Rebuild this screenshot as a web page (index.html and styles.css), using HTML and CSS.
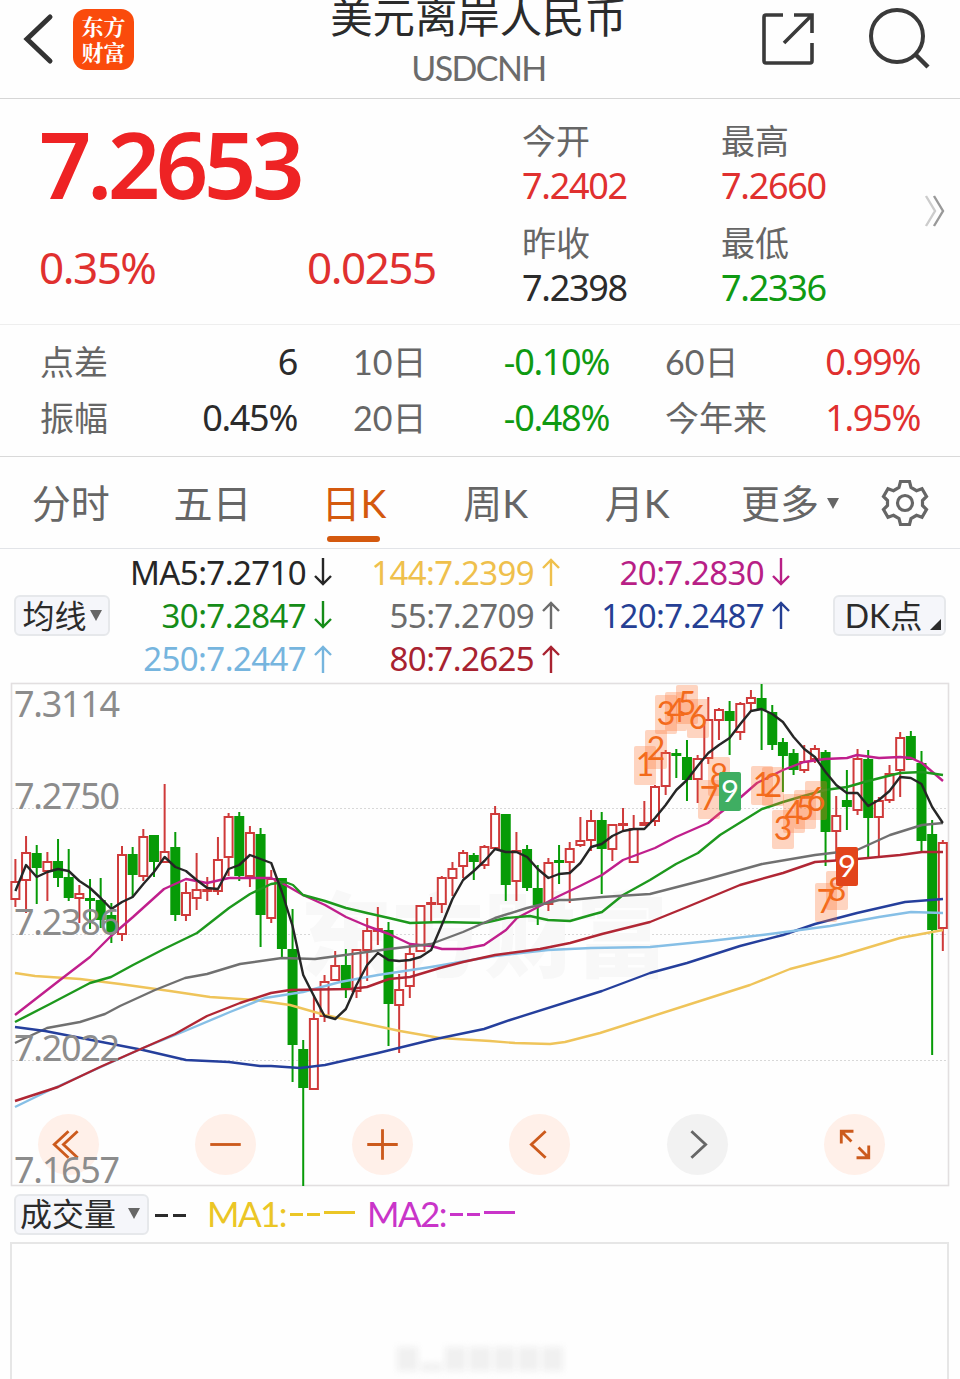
FILE: index.html
```
<!DOCTYPE html>
<html lang="zh-CN">
<head>
    <meta charset="UTF-8">
    <meta name="viewport" content="width=device-width, initial-scale=1.0">
    <title>美元离岸人民币 USDCNH</title>
    <link rel="stylesheet" href="styles.css">
</head>
<body>
    <header class="header">
        <div class="header-left">
            <svg class="back" width="32" height="52" viewBox="0 0 32 52"><path d="M28 4 L5 26 L28 48" fill="none" stroke="#333" stroke-width="5" stroke-linecap="round"/></svg>
            <div class="logo"><span>东方</span><span>财富</span></div>
        </div>
        <div class="header-title">
            <h1>美元离岸人民币</h1>
            <p>USDCNH</p>
        </div>
        <div class="header-right">
            <svg width="54" height="54" viewBox="0 0 54 54" fill="none" stroke="#3a3a3a" stroke-width="3.6"><path d="M22 3 H5 Q3 3 3 5 V49 Q3 51 5 51 H49 Q51 51 51 49 V31"/><path d="M33 3 H51 V21 M50 4 L23 31"/></svg>
            <svg width="64" height="64" viewBox="0 0 64 64" fill="none" stroke="#3a3a3a" stroke-width="4"><circle cx="30" cy="29" r="26"/><path d="M48 47 L61 60" stroke-width="4.5"/></svg>
        </div>
    </header>

    <section class="quote">
        <div class="quote-price">
            <div class="price">7.2653</div>
            <div class="change"><span>0.35%</span><span>0.0255</span></div>
        </div>
        <div class="quote-grid">
            <div><span class="label">今开</span><span class="num red">7.2402</span></div>
            <div><span class="label">最高</span><span class="num red">7.2660</span></div>
            <div><span class="label">昨收</span><span class="num">7.2398</span></div>
            <div><span class="label">最低</span><span class="num green">7.2336</span></div>
        </div>
        <svg class="more" width="24" height="34" viewBox="0 0 24 34" fill="none" stroke-width="2.4"><path d="M4 2 L13 17 L4 32" stroke="#ccc"/><path d="M12 2 L21 17 L12 32" stroke="#999"/></svg>
    </section>

    <section class="stats">
        <div><span class="label">点差</span><span class="num">6</span></div>
        <div><span class="label">10日</span><span class="num green">-0.10%</span></div>
        <div><span class="label">60日</span><span class="num red">0.99%</span></div>
        <div><span class="label">振幅</span><span class="num">0.45%</span></div>
        <div><span class="label">20日</span><span class="num green">-0.48%</span></div>
        <div><span class="label">今年来</span><span class="num red">1.95%</span></div>
    </section>

    <nav class="tabs">
        <a>分时</a>
        <a>五日</a>
        <a class="active">日K</a>
        <a>周K</a>
        <a>月K</a>
        <a>更多<i class="caret"></i></a>
        <a><svg width="48" height="48" viewBox="0 0 48 48" fill="none" stroke="#666" stroke-width="3.2"><path d="M19.500 2.500 H28.500 L30 8.500 L35.500 11.700 L41 9.800 L45.500 17.500 L41.500 21.500 V26.500 L45.500 30.500 L41 38.200 L35.500 36.300 L30 39.500 L28.500 45.500 H19.500 L18 39.500 L12.500 36.300 L7 38.200 L2.500 30.500 L6.500 26.500 V21.500 L2.500 17.500 L7 9.800 L12.500 11.700 L18 8.500 Z"/><circle cx="24" cy="24" r="7.500"/></svg></a>
    </nav>

    <section class="averages">
        <button class="pill">均线<i class="caret"></i></button>
        <div class="ma-list" id="maList"></div>
        <button class="pill pill-dk">DK点<i class="corner"></i></button>
    </section>

    <section class="chart">
        <svg id="kline" width="940" height="505" viewBox="10 682 940 505"></svg>
        <div class="controls">
            <button><svg viewBox="0 0 60 60"><path d="M30 17 L16 30 L30 43 M39 17 L25 30 L39 43"/></svg></button>
            <button><svg viewBox="0 0 60 60"><path d="M15 30 H45"/></svg></button>
            <button><svg viewBox="0 0 60 60"><path d="M15 30 H45 M30 15 V45"/></svg></button>
            <button><svg viewBox="0 0 60 60"><path d="M36 17 L22 30 L36 43"/></svg></button>
            <button class="off"><svg viewBox="0 0 60 60"><path d="M24 17 L38 30 L24 43"/></svg></button>
            <button><svg viewBox="0 0 60 60"><path d="M17 29 V17 H29 M17 17 L27 27 M44 31 V43 H32 M44 43 L34 33"/></svg></button>
        </div>
    </section>

    <section class="volume-bar">
        <button class="pill pill-volume">成交量<i class="caret"></i></button>
        <span class="volume-value"><i></i><i></i></span>
        <span class="volume-ma yellow">MA1:<i></i><i></i><b></b></span>
        <span class="volume-ma purple">MA2:<i></i><i></i><b></b></span>
    </section>
    <section class="volume">
        <div class="smudge"><i></i><i></i><i></i><i></i><i></i><i></i><i></i></div>
    </section>

    <script src="chart.js"></script>
</body>
</html>
```
FILE: styles.css
```
* {
    box-sizing: border-box;
}
body {
    margin: 0;
    width: 960px;
    height: 1379px;
    overflow: hidden;
    display: flex;
    flex-direction: column;
    background-color: #fefefe;
    color: #2b2b2b;
    font-family: Lato, "Noto Sans CJK SC", sans-serif;
    font-kerning: none;
}
button {
    font-family: inherit;
    color: inherit;
    padding: 0;
    border: none;
}
.header {
    height: 99px;
    flex: none;
    display: grid;
    grid-template-columns: 300px 357px 1fr;
    border-bottom: 1px solid #d6d6d6;
    overflow: hidden;
}
.header-left {
    display: flex;
    align-items: center;
    gap: 19px;
    height: 78px;
    padding-left: 22px;
}
.logo {
    width: 61px;
    height: 61px;
    border-radius: 13px;
    background-color: #fa4b0c;
    color: white;
    display: flex;
    flex-direction: column;
    align-items: center;
    justify-content: center;
    font-family: "Noto Serif CJK SC", "Noto Sans CJK SC", sans-serif;
    font-size: 22px;
    font-weight: 700;
    line-height: 26px;
}
.header-title {
    text-align: center;
    white-space: nowrap;
}
.header-title h1 {
    margin: -11px 0 0;
    font-size: 42.4px;
    font-weight: 400;
    line-height: 56px;
}
.header-title p {
    margin: 3px 0 0;
    font-size: 34px;
    line-height: 40px;
    color: #6b6b6b;
    letter-spacing: -1.6px;
}
.header-right {
    display: flex;
    align-items: center;
    gap: 52px;
    height: 78px;
    padding-left: 104px;
}
.header-right svg {
    flex: none;
}
.red {
    color: #e0302f;
}
.green {
    color: #0f9a12;
}
.label {
    color: #666;
    font-size: 34px;
}
.price,
.change,
.num,
.ma-list,
.axis {
    font-family: "Noto Sans", "Noto Sans CJK SC", sans-serif;
}
.num {
    font-size: 36px;
    letter-spacing: -1.3px;
}
.quote {
    height: 226px;
    flex: none;
    display: grid;
    grid-template-columns: 522px 400px 38px;
    border-bottom: 1px solid #eee;
}
.quote-price {
    padding: 15px 0 0 39px;
    color: #ee2324;
}
.price {
    font-size: 92px;
    font-weight: 600;
    line-height: 100px;
    letter-spacing: -4.6px;
}
.change {
    display: flex;
    margin-top: 26px;
    font-size: 44px;
    line-height: 54px;
    letter-spacing: -1.5px;
    color: #e0302f;
}
.change span:first-child {
    width: 268px;
}
.quote-grid {
    display: grid;
    grid-template-columns: 199px 199px;
    grid-auto-rows: 92px;
    row-gap: 10px;
    padding-top: 19px;
}
.quote-grid div {
    display: flex;
    flex-direction: column;
    line-height: 46px;
}
.quote-grid .num {
    line-height: 44px;
}
.more {
    margin-top: 95px;
}
.stats {
    height: 132px;
    flex: none;
    display: grid;
    grid-template-columns: 257px 256px 255px;
    column-gap: 56px;
    grid-auto-rows: 56px;
    padding: 9px 0 0 40px;
    border-bottom: 1px solid #d9d9d9;
}
.stats div {
    display: flex;
    justify-content: space-between;
    line-height: 56px;
}
.tabs {
    height: 92px;
    flex: none;
    display: grid;
    grid-template-columns: repeat(5, 141.6px) 164px 66px;
    border-bottom: 1px solid #e2e4e8;
    font-size: 39px;
    line-height: 92px;
    color: #666;
}
.tabs a {
    display: flex;
    justify-content: center;
    align-items: center;
}
.tabs .active {
    position: relative;
    color: #d4590e;
}
.tabs .active::after {
    content: "";
    position: absolute;
    bottom: 7px;
    width: 53px;
    height: 6px;
    border-radius: 3px;
    background-color: #d4590e;
}
.caret {
    border: 6px solid transparent;
    border-top: 11px solid #666;
    border-bottom: none;
}
.tabs .caret {
    margin-left: 8px;
}
.averages {
    height: 133px;
    flex: none;
    display: grid;
    grid-template-columns: 96px 680px 112px;
    column-gap: 22px;
    padding-left: 14px;
    align-items: center;
}
.pill {
    display: flex;
    align-items: center;
    justify-content: center;
    gap: 3px;
    height: 41px;
    border: 2px solid #e6e8eb;
    border-radius: 6px;
    background-color: #f5f6fa;
    font-size: 32px;
    line-height: 34px;
    white-space: nowrap;
}
.ma-list {
    display: grid;
    grid-template-columns: 200px 228px 230px;
    grid-auto-rows: 43.3px;
    font-size: 33px;
    letter-spacing: -0.6px;
}
.ma-list div {
    display: flex;
    justify-content: flex-end;
    align-items: center;
    gap: 8px;
}
.ma-list svg {
    flex: none;
}
.pill-dk {
    margin-left: -1px;
    position: relative;
    padding-right: 12px;
}
.corner {
    position: absolute;
    right: 3px;
    bottom: 4px;
    border-left: 11px solid transparent;
    border-bottom: 11px solid #2b2b2b;
}
.chart {
    position: relative;
    height: 505px;
    flex: none;
    padding-left: 10px;
    isolation: isolate;
}
.chart > svg {
    display: block;
    pointer-events: none;
}
/* sits under the plot so the axis text stays readable */
.controls {
    position: absolute;
    z-index: -1;
    left: 37.5px;
    bottom: 12px;
    display: flex;
    gap: 96.3px;
}
.controls button {
    width: 61px;
    height: 61px;
    border-radius: 50%;
    background-color: #fff0e9;
}
.controls svg {
    display: block;
    fill: none;
    stroke: #cc5a1c;
    stroke-width: 2.8;
}
.controls .off {
    background-color: #f2f2f2;
}
.controls .off svg {
    stroke: #666;
}
.volume-bar {
    height: 55px;
    flex: none;
    display: flex;
    align-items: center;
    padding-left: 14px;
}
.pill-volume {
    width: 135px;
    gap: 12px;
    line-height: 32px;
    padding: 0 3px 2px 0;
}
.volume-value {
    display: flex;
    gap: 5px;
    width: 52px;
    margin-left: 6px;
}
.volume-bar span i {
    width: 13px;
    height: 3px;
    margin-top: 1px;
    background-color: currentColor;
}
.volume-ma {
    display: flex;
    align-items: center;
    gap: 4px;
    width: 160px;
    margin-top: -4px;
    font-size: 35px;
    line-height: 50px;
    letter-spacing: -1.6px;
}
.volume-ma b {
    width: 31px;
    height: 3px;
    margin-top: -1px;
    background-color: currentColor;
}
.volume-bar .volume-ma i {
    margin-top: 4px;
}
.yellow {
    color: #ebc626;
}
.purple {
    color: #c935c9;
}
.volume {
    flex: 1;
    margin: 0 11px 0 10px;
    border: 2px solid #e6e6e6;
    border-bottom: none;
}
.smudge {
    display: flex;
    align-items: flex-end;
    gap: 3px;
    width: 166px;
    height: 28px;
    margin: 99px 0 0 385px;
    filter: blur(3px);
}
.smudge i {
    flex: 1;
    height: 24px;
    background-color: #f0f0f0;
}
.smudge i:nth-child(2) {
    height: 8px;
}

/* k-line chart */
.frame {
    fill: none;
    stroke: #e2dfe0;
    stroke-width: 1.6;
}
.gridline {
    stroke: #d8d8d8;
    stroke-dasharray: 2 2;
}
.axis {
    fill: #8c8c8c;
    font-size: 36px;
    letter-spacing: -1.3px;
}
.watermark {
    fill: #f8f8f8;
    font-size: 92px;
    font-weight: 900;
}
.up {
    fill: #fff;
    stroke: #cf3a3a;
    stroke-width: 2;
}
.down {
    fill: #079b07;
    stroke: #079b07;
    stroke-width: 2;
}
.line {
    fill: none;
    stroke-width: 2.4;
    stroke-linejoin: round;
}
.mark {
    fill: #ff7433;
    fill-opacity: 0.3;
}
.mark-text {
    fill: #f26a1b;
    font-size: 32px;
    text-anchor: middle;
}
.mark-nine {
    fill: #fff;
    font-size: 31px;
    text-anchor: middle;
}
```
FILE: chart.js
```
const STEP = 10.66;
const FIRST_X = 15.4;

// u = up, d = down: high, body top, body bottom, low
const candles = `u 859 881 900 907|u 836 852 881 913|d 845 853 868 904|u 852 861 872 901|d 839 861 878 887|d 849 877 898 901|u 885 893 899 923|d 879 898 901 929|d 878 900 920 928|d 903 915 933 943
u 846 854 935 941|d 847 854 875 897|u 829 836 877 881|d 835 835 862 877|u 784 851 863 863|d 832 847 915 921|u 882 892 916 921|u 853 889 899 910|u 877 889 892 901|u 837 859 892 895
u 813 816 858 876|d 812 816 876 881|u 826 832 877 887|d 828 834 915 947|u 870 878 919 923|d 878 878 949 957|d 909 949 1045 1082|d 1040 1049 1088 1186|u 995 1018 1090 1090|u 975 981 1017 1022
u 951 965 981 981|d 949 965 990 998|u 949 949 992 998|u 918 930 951 981|u 907 928 932 945|d 922 930 1004 1046|u 974 989 1006 1053|u 945 953 987 998|u 905 905 952 952|u 897 902 905 923
u 876 877 905 913|u 862 868 879 896|u 850 852 867 878|d 853 855 862 880|u 845 846 866 869|u 806 813 849 849|d 814 814 885 901|u 832 850 882 901|d 845 849 888 891|d 865 888 905 925
u 858 862 905 911|d 845 860 862 884|u 842 848 863 903|u 817 840 846 847|u 810 820 841 851|d 812 820 849 894|u 824 824 850 861|u 808 823 826 832|u 815 828 863 863|u 801 822 826 826
u 785 786 822 826|u 750 752 787 795|d 749 753 755 778|d 740 757 780 801|u 755 758 780 803|u 697 719 759 764|u 708 709 721 740|d 701 711 721 755|u 702 703 733 740|u 690 697 704 710
d 684 698 710 750|d 705 712 745 750|d 738 742 756 792|d 749 753 770 775|u 745 761 771 773|u 745 748 760 763|d 750 752 832 866|u 796 815 832 860|d 770 800 807 830|u 749 758 811 815
d 750 759 818 857|u 797 800 818 857|u 765 773 801 803|u 732 737 771 797|d 731 736 760 760|d 751 763 841 852|d 820 834 930 1055|u 840 842 929 951`
    .split(/[|\n]/).map(row => row.split(' '));

const ma5 = [891, 865, 877, 872, 869, 871, 881, 888, 898, 909, 902, 897, 884, 872, 857, 867, 871, 880, 888, 889, 869, 865, 855, 859, 863, 892, 926, 975, 996, 1016, 1019, 1009, 985, 965, 953, 960, 961, 960, 957, 950, 925, 899, 880, 871, 861, 849, 852, 852, 857, 869, 878, 874, 873, 863, 847, 844, 836, 831, 829, 829, 818, 805, 790, 780, 766, 753, 745, 738, 724, 711, 709, 714, 722, 737, 749, 757, 772, 785, 793, 793, 806, 800, 791, 777, 778, 784, 807, 823];

const lines = [
    ['#efc45a', '15,973 35,976 80,979 120,984 170,991 210,997 255,1000 290,1005 325,1015 400,1031 440,1038 490,1041 515,1043 550,1044 565,1042 600,1033 650,1017 700,1001 750,985 790,969 840,956 900,938 943,930'],
    ['#c01f8c', '15,1015 60,980 90,957 111,936 133,917 164,889 186,879 207,883 229,878 250,878 271,878 282,883 303,895 325,905 346,917 367,926 389,934 410,944 431,946 442,949 463,949 484,945 506,930 517,918 538,907 559,896 580,886 602,875 623,860 655,848 676,837 708,823 720,813 741,797 757,783 783,770 804,762 825,759 847,758 857,755 879,758 900,757 911,758 922,763 943,781'],
    ['#1d981d', '15,1022 50,1004 90,983 111,977 133,965 164,949 197,933 229,908 250,894 271,884 285,882 293,885 303,895 325,901 346,908 367,913 389,918 410,923 442,922 484,923 506,918 530,916 548,920 570,921 591,915 602,912 623,895 650,880 676,864 698,853 720,835 741,822 762,809 783,802 800,797 825,790 847,787 868,781 900,773 922,772 943,775'],
    ['#707070', '15,1043 47,1028 80,1022 105,1014 120,1006 155,990 185,978 207,974 240,964 282,958 315,959 345,955 389,949 431,944 463,932 495,918 527,908 559,900 570,900 602,897 650,894 708,879 762,864 815,855 857,850 890,835 922,825 943,823'],
    ['#253f9c', '15,1027 45,1031 143,1050 186,1060 229,1062 260,1066 271,1066 300,1068 325,1065 378,1053 431,1040 484,1029 510,1020 602,991 650,973 687,963 740,946 783,935 815,924 857,913 905,902 943,899'],
    ['#86bfe6', '15,1107 50,1090 143,1048 185,1031 230,1012 265,998 303,992 340,982 378,975 431,967 495,956 548,950 591,948 650,947 710,941 770,934 830,926 879,917 911,912 943,913'],
    ['#b02634', '15,1101 58,1087 100,1067 143,1048 175,1034 207,1016 240,1003 271,993 290,990 350,989 367,987 389,979 410,977 440,968 463,962 495,955 540,949 570,943 602,934 650,922 687,907 740,885 783,873 815,862 857,859 900,855 922,852 943,852'],
    ['#262626', ma5.map((y, i) => `${FIRST_X + i * STEP},${y}`).join(' ')]
];

const axis = [['7.3114', 717], ['7.2750', 809], ['7.2386', 935], ['7.2022', 1061], ['7.1657', 1183]];

// count marks: text, left, top
const marks = [
    [1, 634, 746], [2, 645, 730], [3, 655, 695], [4, 665, 692], [5, 676, 685], [6, 687, 699], [8, 708, 757], [7, 698, 780],
    [1, 751, 766], [2, 762, 767], [3, 772, 810], [4, 783, 794], [5, 794, 790], [6, 805, 781], [7, 815, 883], [8, 826, 871]
];
const nines = [[719, 772, '#3fae62'], [836, 847, '#e2441b']];

let svg = '<rect class="frame" x="11.500" y="683.500" width="937" height="502"/>';
[808.5, 934.5, 1060.5].forEach(y => {
    svg += `<line class="gridline" x1="12" x2="948" y1="${y}" y2="${y}"/>`;
});
svg += '<text class="watermark" x="300" y="970">东方财富</text>';
candles.forEach(([type, high, top, bottom, low], i) => {
    const x = FIRST_X + i * STEP;
    const cls = type === 'u' ? 'up' : 'down';
    svg += `<path class="${cls}" d="M${x} ${high}V${top}M${x} ${bottom}V${low}"/>`;
    svg += `<rect class="${cls}" x="${x - 4}" y="${+top + 1}" width="8" height="${Math.max(bottom - top - 2, 1)}"/>`;
});
lines.forEach(([color, points]) => {
    svg += `<polyline class="line" stroke="${color}" points="${points}"/>`;
});
axis.forEach(([text, y]) => {
    svg += `<text class="axis" x="14" y="${y}">${text}</text>`;
});
marks.forEach(([text, x, y]) => {
    svg += `<rect class="mark" x="${x}" y="${y}" width="22" height="39" rx="2"/><text class="mark-text" x="${x + 11}" y="${y + 30}">${text}</text>`;
});
nines.forEach(([x, y, color]) => {
    svg += `<rect x="${x}" y="${y}" width="22" height="39" rx="2" fill="${color}"/><text class="mark-nine" x="${x + 11}" y="${y + 30}">9</text>`;
});
document.getElementById('kline').innerHTML = svg;

const averages = [
    ['MA5:7.2710', 'down', '#262626'], ['144:7.2399', 'up', '#efc04c'], ['20:7.2830', 'down', '#b81f86'],
    ['30:7.2847', 'down', '#158c18'], ['55:7.2709', 'up', '#6c6c6c'], ['120:7.2487', 'up', '#253f94'],
    ['250:7.2447', 'up', '#76b5de'], ['80:7.2625', 'up', '#a82230']
];
const arrows = { up: 'M9 28V2M1 10L9 2L17 10', down: 'M9 0V26M1 18L9 26L17 18' };
document.getElementById('maList').innerHTML = averages.map(([text, dir, color]) =>
    `<div style="color:${color}"><span>${text}</span><svg width="18" height="28" fill="none" stroke="currentColor" stroke-width="2.4"><path d="${arrows[dir]}"/></svg></div>`
).join('');
```
